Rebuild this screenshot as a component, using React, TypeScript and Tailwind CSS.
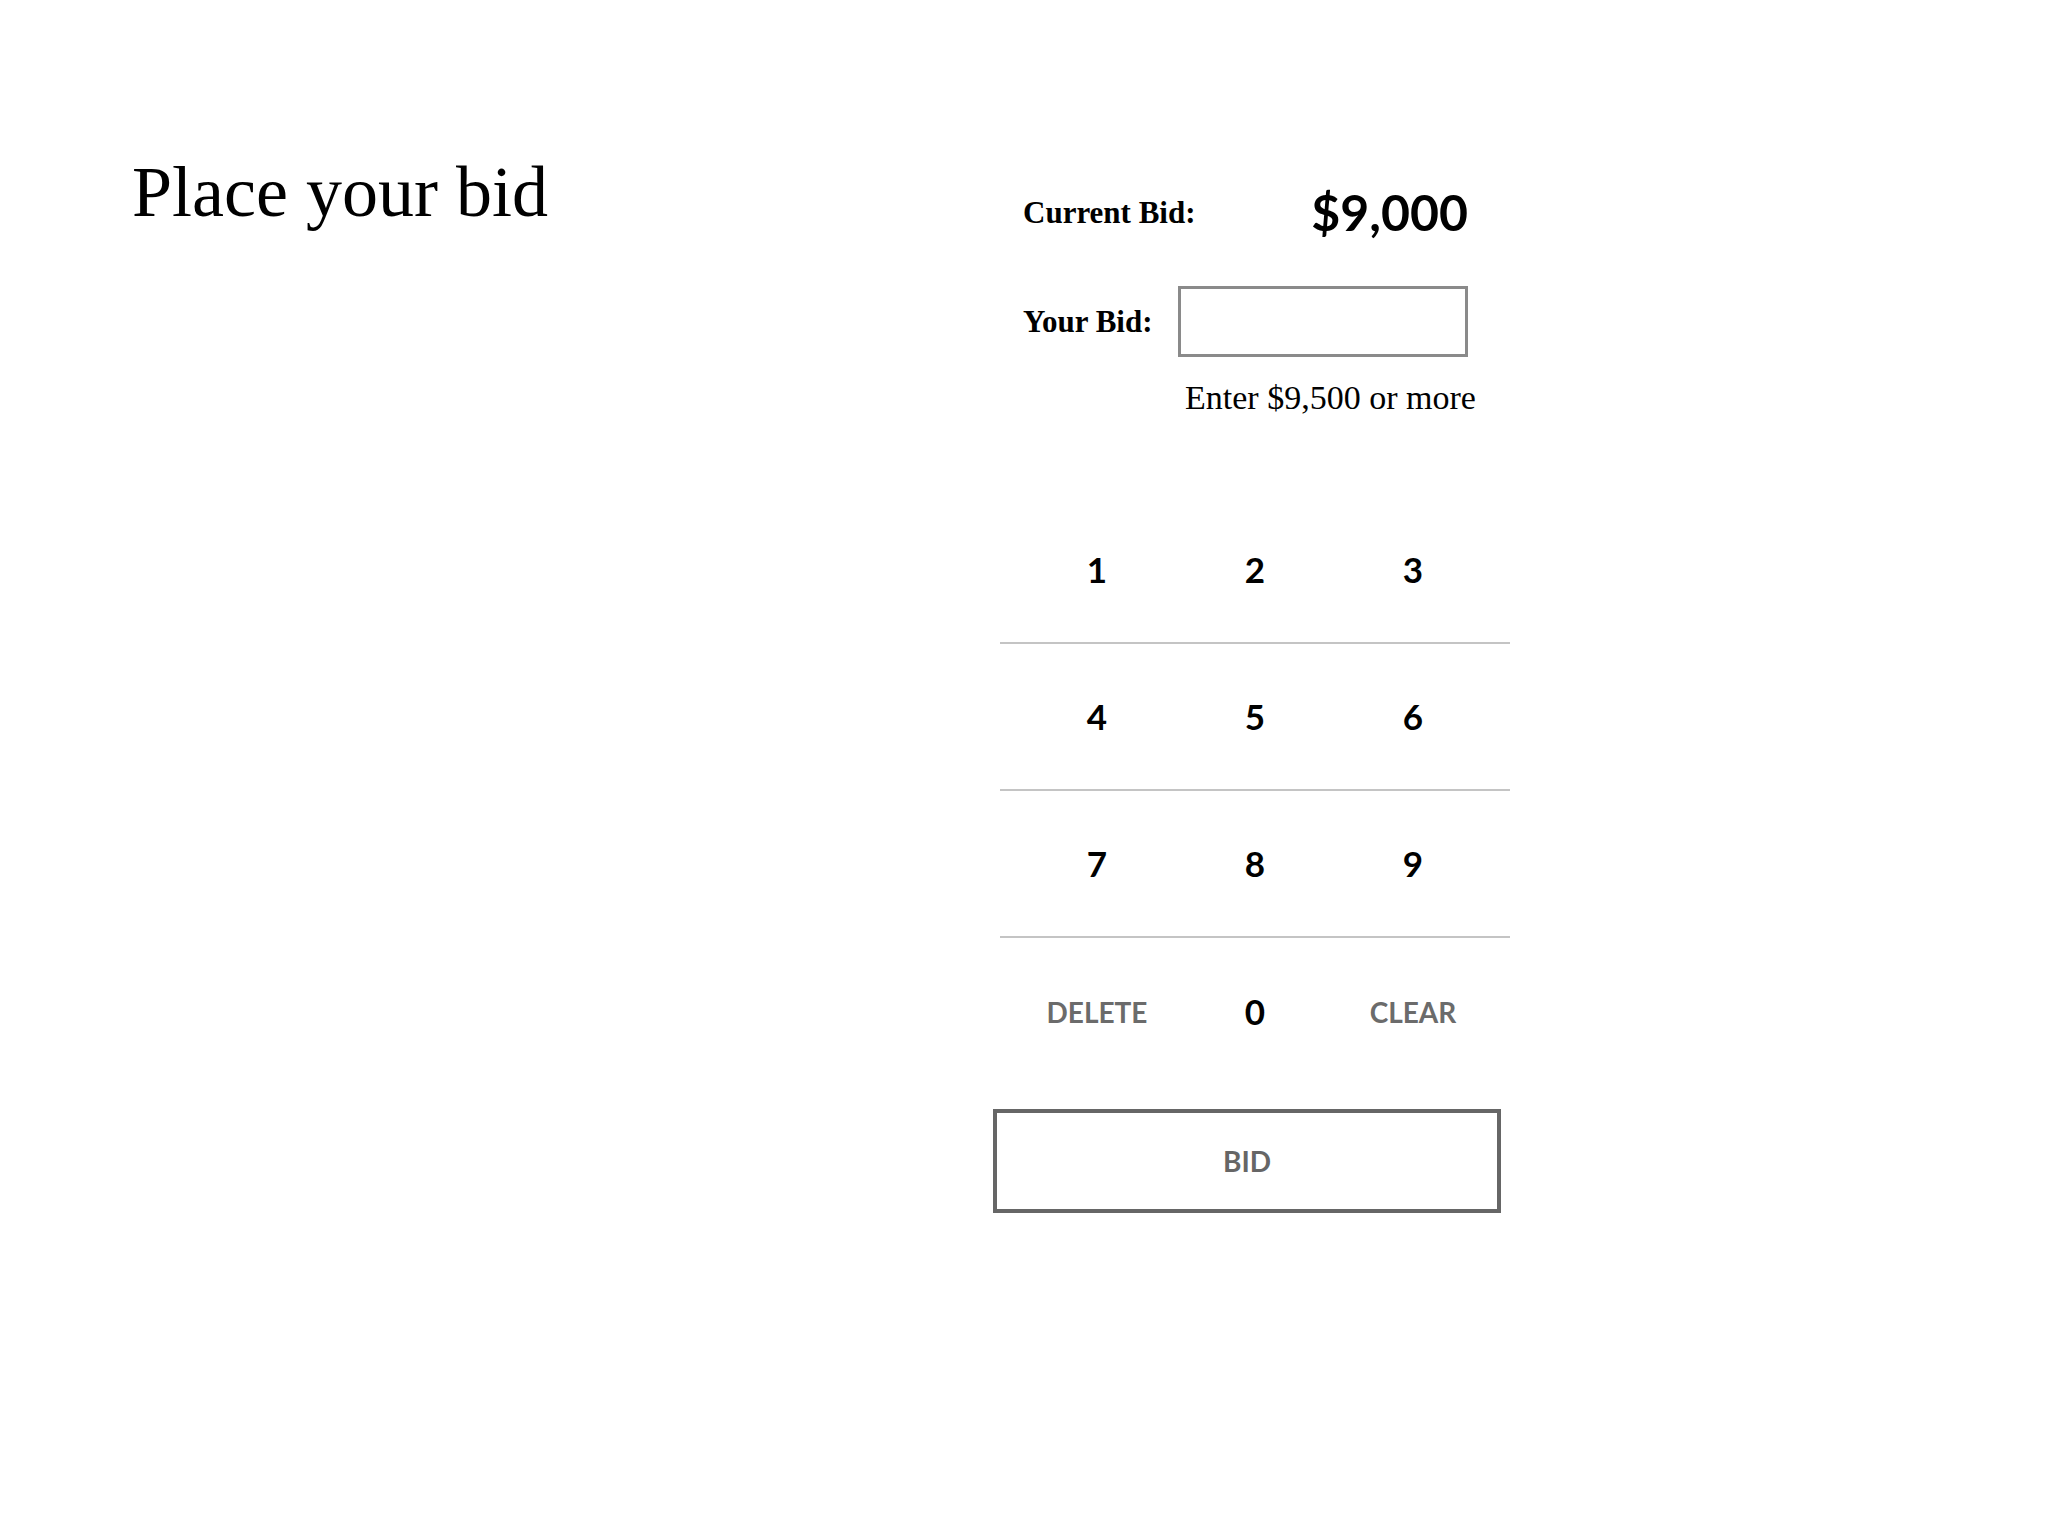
import React, { useState } from 'react';

const rows: string[][] = [
  ['1', '2', '3'],
  ['4', '5', '6'],
  ['7', '8', '9'],
  ['DELETE', '0', 'CLEAR'],
];

const App: React.FC = () => {
  const [bid, setBid] = useState('');

  const press = (k: string) => {
    if (k === 'DELETE') setBid(b => b.slice(0, -1));
    else if (k === 'CLEAR') setBid('');
    else setBid(b => b + k);
  };

  return (
    <div className="w-[2048px] h-[1536px] bg-white flex text-black">
      {/* left: title */}
      <div className="w-[992px] pl-[132px] pt-[156px]">
        <h1 className="text-[72px] leading-none font-normal font-['Liberation_Serif',serif]">Place your bid</h1>
      </div>

      {/* right: bid form + keypad */}
      <div className="w-[530px] pt-[187px]">
        <div className="flex items-center justify-between pl-[31px] w-[476px]">
          <span className="text-[31px] leading-none font-bold font-['Liberation_Serif',serif]">Current Bid:</span>
          <span className="text-[50px] leading-none font-bold font-['Lato','Liberation_Sans',sans-serif]">$9,000</span>
        </div>

        <div className="flex items-center pl-[31px] mt-[49px]">
          <span className="w-[155px] text-[31px] leading-none font-bold font-['Liberation_Serif',serif]">Your Bid:</span>
          <input
            value={bid}
            onChange={e => setBid(e.target.value.replace(/[^\d]/g, ''))}
            className="w-[290px] h-[71px] border-[3px] border-[#8a8a8a] px-3 text-[30px] outline-none font-['Lato','Liberation_Sans',sans-serif]"
          />
        </div>

        <p className="pl-[193px] mt-[24px] text-[34px] leading-none font-['Liberation_Serif',serif]">Enter $9,500 or more</p>

        <div className="ml-[8px] w-[510px] mt-[82px]">
          {rows.map((row, i) => (
            <div
              key={i}
              className={`h-[147px] flex items-center justify-center ${i < 3 ? 'border-b-2 border-[#c4c4c4]' : ''}`}
            >
              {row.map(k => (
                <button
                  key={k}
                  onClick={() => press(k)}
                  className={`w-[158px] text-center font-bold leading-none font-['Lato','Liberation_Sans',sans-serif] ${k.length > 1 ? 'text-[28px] text-[#6b6b6b]' : 'text-[35px] text-black'}`}
                >
                  {k}
                </button>
              ))}
            </div>
          ))}
        </div>

        <button className="mt-[24px] ml-[1px] w-[508px] h-[104px] border-4 border-[#666666] text-[28px] font-bold text-[#666666] font-['Lato','Liberation_Sans',sans-serif]">
          BID
        </button>
      </div>
    </div>
  );
};

export default App;
